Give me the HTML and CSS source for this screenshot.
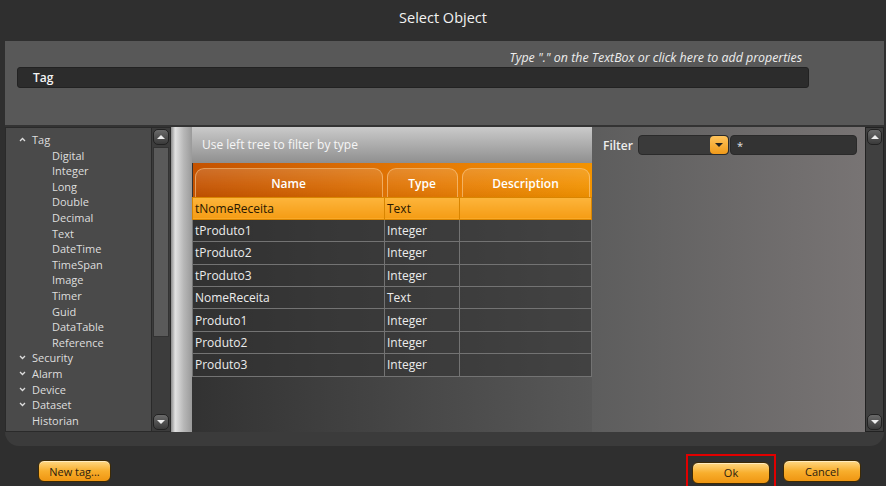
FILE: index.html
```html
<!DOCTYPE html>
<html lang="en">
<head>
    <meta charset="UTF-8">
    <title>Select Object</title>
    <link rel="stylesheet" href="styles.css">
</head>
<body>

<div class="title">Select Object</div>

<div class="dialog">
    <div class="props">
        <div class="hint">Type "." on the TextBox or click here to add properties</div>
        <div class="path-box">Tag</div>
    </div>

    <div class="workspace">
        <!-- type tree -->
        <div class="tree-pane">
            <ul class="tree">
                <li class="node"><svg class="chev" width="7" height="5" viewBox="0 0 7 5"><path d="M1 4 L3.5 1.5 L6 4" fill="none" stroke="#ddd" stroke-width="1.3"/></svg>Tag</li>
                <li class="leaf">Digital</li>
                <li class="leaf">Integer</li>
                <li class="leaf">Long</li>
                <li class="leaf">Double</li>
                <li class="leaf">Decimal</li>
                <li class="leaf">Text</li>
                <li class="leaf">DateTime</li>
                <li class="leaf">TimeSpan</li>
                <li class="leaf">Image</li>
                <li class="leaf">Timer</li>
                <li class="leaf">Guid</li>
                <li class="leaf">DataTable</li>
                <li class="leaf">Reference</li>
                <li class="node"><svg class="chev" width="7" height="5" viewBox="0 0 7 5"><path d="M1 1 L3.5 3.5 L6 1" fill="none" stroke="#ddd" stroke-width="1.3"/></svg>Security</li>
                <li class="node"><svg class="chev" width="7" height="5" viewBox="0 0 7 5"><path d="M1 1 L3.5 3.5 L6 1" fill="none" stroke="#ddd" stroke-width="1.3"/></svg>Alarm</li>
                <li class="node"><svg class="chev" width="7" height="5" viewBox="0 0 7 5"><path d="M1 1 L3.5 3.5 L6 1" fill="none" stroke="#ddd" stroke-width="1.3"/></svg>Device</li>
                <li class="node"><svg class="chev" width="7" height="5" viewBox="0 0 7 5"><path d="M1 1 L3.5 3.5 L6 1" fill="none" stroke="#ddd" stroke-width="1.3"/></svg>Dataset</li>
                <li class="node">Historian</li>
            </ul>
            <div class="vscroll">
                <div class="sb-btn"><span class="tri up"></span></div>
                <div class="sb-thumb"></div>
                <div class="sb-track"></div>
                <div class="sb-btn"><span class="tri dn"></span></div>
            </div>
        </div>

        <!-- object grid -->
        <div class="grid-pane">
            <div class="grip"></div>
            <div class="grid">
                <div class="grid-hint">Use left tree to filter by type</div>
                <table>
                    <colgroup>
                        <col class="col-name">
                        <col class="col-type">
                        <col>
                    </colgroup>
                    <thead>
                        <tr>
                            <th><div class="col-head">Name</div></th>
                            <th><div class="col-head">Type</div></th>
                            <th><div class="col-head">Description</div></th>
                        </tr>
                    </thead>
                    <tbody>
                        <tr class="selected"><td>tNomeReceita</td><td>Text</td><td></td></tr>
                        <tr><td>tProduto1</td><td>Integer</td><td></td></tr>
                        <tr><td>tProduto2</td><td>Integer</td><td></td></tr>
                        <tr><td>tProduto3</td><td>Integer</td><td></td></tr>
                        <tr><td>NomeReceita</td><td>Text</td><td></td></tr>
                        <tr><td>Produto1</td><td>Integer</td><td></td></tr>
                        <tr><td>Produto2</td><td>Integer</td><td></td></tr>
                        <tr><td>Produto3</td><td>Integer</td><td></td></tr>
                    </tbody>
                </table>
            </div>
        </div>

        <!-- filter -->
        <div class="filter-pane">
            <div class="filter-row">
                <span class="filter-label">Filter</span>
                <div class="combo"><span class="combo-btn"><span class="tri dn"></span></span></div>
                <div class="filter-input">*</div>
            </div>
        </div>
        <div class="vscroll right">
            <div class="sb-btn"><span class="tri up"></span></div>
            <div class="sb-track"></div>
            <div class="sb-btn"><span class="tri dn"></span></div>
        </div>
    </div>
</div>

<div class="actions">
    <button class="btn">New tag...</button>
    <div class="focus-ring"><button class="btn">Ok</button></div>
    <button class="btn cancel">Cancel</button>
</div>

</body>
</html>
```

FILE: styles.css
```css
/* dialog shell */
body {
    margin: 0;
    width: 886px;
    height: 486px;
    overflow: hidden;
    background: #2f2f2f;
    font-family: "Open Sans", "Noto Sans", sans-serif;
    color: #e6e6e6;
}
.title {
    height: 41px;
    line-height: 36px;
    text-align: center;
    font-size: 14.5px;
    color: #f2f2f2;
}
.dialog {
    margin: 0 2px 0 5px;
    background: #3b3b3b;
    border-radius: 0 0 14px 14px;
    padding-bottom: 14px;
}

/* property path */
.props {
    height: 84px;
    box-sizing: border-box;
    padding: 9px 75px 0 12px;
    background: #585858;
}
.hint {
    height: 16px;
    line-height: 16px;
    margin-right: 7px;
    text-align: right;
    font-size: 12.4px;
    font-style: italic;
    color: #eee;
}
.path-box {
    height: 21px;
    margin-top: 1px;
    box-sizing: border-box;
    padding-left: 15px;
    line-height: 19px;
    font-size: 12px;
    font-weight: 600;
    color: #f4f4f4;
    background: #2c2c2c;
    border: 1px solid #222;
    border-radius: 3px;
}

/* main area */
.workspace {
    display: flex;
    height: 307px;
    border-top: 2px solid #333;
    box-sizing: border-box;
}
.tree-pane {
    display: flex;
    width: 166px;
    background: #4a4a4a;
    border: 1px solid #2a2a2a;
    box-sizing: border-box;
}
.tree {
    flex: 1;
    list-style: none;
    margin: 0;
    padding: 4px 0 0 0;
    font-size: 11px;
    color: #dedede;
}
.tree li {
    height: 15.6px;
    line-height: 15.6px;
    white-space: nowrap;
}
.tree .node {
    padding-left: 26px;
    position: relative;
}
.tree .leaf {
    padding-left: 46px;
}
.chev {
    position: absolute;
    left: 13px;
    top: 5px;
}

/* scrollbars */
.vscroll {
    display: flex;
    flex-direction: column;
    width: 19px;
    padding: 1px 1px;
    box-sizing: border-box;
    background: #3c3c3c;
    border-left: 1px solid #2a2a2a;
}
.vscroll.right {
    border: 1px solid #222;
    background: #404040;
}
.sb-btn {
    height: 14px;
    display: flex;
    align-items: center;
    justify-content: center;
    background: linear-gradient(#6a6a6a, #3a3a3a);
    border: 1px solid #222;
    border-radius: 5px;
}
.sb-thumb {
    height: 188px;
    margin-top: 2px;
    background: #5a5a5a;
    border: 1px solid #333;
}
.sb-track {
    flex: 1;
}
.tri {
    width: 0;
    height: 0;
    border-left: 4px solid transparent;
    border-right: 4px solid transparent;
}
.tri.up {
    border-bottom: 4px solid #eee;
}
.tri.dn {
    border-top: 4px solid #eee;
}

/* grid */
.grid-pane {
    display: flex;
    width: 421px;
}
.grip {
    width: 21px;
    background: linear-gradient(to right, #8c8c8c, #e2e2e2 20%, #b8b8b8 60%, #9a9a9a);
}
.grid {
    flex: 1;
    background: linear-gradient(to right, #323232, #585858);
}
.grid-hint {
    height: 36px;
    line-height: 36px;
    padding-left: 10px;
    font-size: 12px;
    color: #f6f6f6;
    background: linear-gradient(#cacaca, #8f8f8f);
}
.grid table {
    width: 100%;
    border-collapse: collapse;
    table-layout: fixed;
    font-size: 12px;
}
.col-name {
    width: 192px;
}
.col-type {
    width: 75px;
}
.grid thead tr {
    background: linear-gradient(to right, #c45200, #e57a05 60%, #f39300);
}
.grid th {
    height: 34px;
    box-sizing: border-box;
    padding: 0 2px;
    vertical-align: bottom;
}
.col-head {
    height: 29px;
    line-height: 30px;
    box-sizing: border-box;
    border: 1px solid rgba(255, 215, 160, 0.55);
    border-bottom: none;
    border-radius: 9px 9px 0 0;
    background: linear-gradient(rgba(255, 255, 255, 0.16), rgba(255, 255, 255, 0.06) 55%, rgba(0, 0, 0, 0.04));
    color: #fff;
    font-weight: 600;
    font-size: 12px;
}
.grid td {
    height: 22.4px;
    box-sizing: border-box;
    padding: 0 2px;
    color: #ececec;
    background: rgba(50, 50, 50, 0.55);
    border: 1px solid #737373;
    white-space: nowrap;
}
.grid tr.selected td {
    color: #2a1800;
    background: linear-gradient(#fdb53c, #f59c14);
    border-color: #d98500;
}

/* filter */
.filter-pane {
    flex: 1;
    padding: 8px 8px 0 11px;
    background: linear-gradient(to right, #5d5d5d, #787474);
}
.filter-row {
    display: flex;
    align-items: center;
}
.filter-label {
    font-size: 12px;
    font-weight: 600;
    color: #eee;
    margin-right: 5px;
}
.combo {
    display: flex;
    justify-content: flex-end;
    width: 91px;
    height: 20px;
    box-sizing: border-box;
    background: #3a3a3a;
    border: 1px solid #2a2a2a;
    border-radius: 4px;
}
.combo-btn {
    width: 18px;
    height: 18px;
    display: flex;
    align-items: center;
    justify-content: center;
    background: linear-gradient(#ffc45c, #f09a1a);
    border-radius: 4px;
}
.combo-btn .tri.dn {
    border-top-color: #222;
}
.filter-input {
    flex: 1;
    height: 20px;
    margin-left: 1px;
    box-sizing: border-box;
    padding-left: 6px;
    line-height: 20px;
    font-size: 11px;
    background: #333;
    border: 1px solid #2a2a2a;
    border-radius: 4px;
}

/* buttons */
.actions {
    display: flex;
    align-items: flex-start;
    padding: 8px 25px 0 38px;
}
.btn {
    width: 78px;
    height: 22px;
    padding: 0;
    font-family: "Open Sans", "Noto Sans", sans-serif;
    font-size: 11px;
    color: #2b2010;
    background: linear-gradient(#ffd884, #f8ae2c 50%, #ef9612);
    border: 1px solid #3d2a05;
    border-radius: 6px;
    box-shadow: inset 0 1px 0 rgba(255, 255, 255, 0.5);
}
.actions > .btn:first-child {
    width: 73px;
    margin-top: 6px;
}
.focus-ring {
    margin-left: auto;
    padding: 4px;
    border: 2px solid #e10000;
    height: 22px;
}
.btn.cancel {
    margin-left: 7px;
    margin-top: 6px;
}
```
